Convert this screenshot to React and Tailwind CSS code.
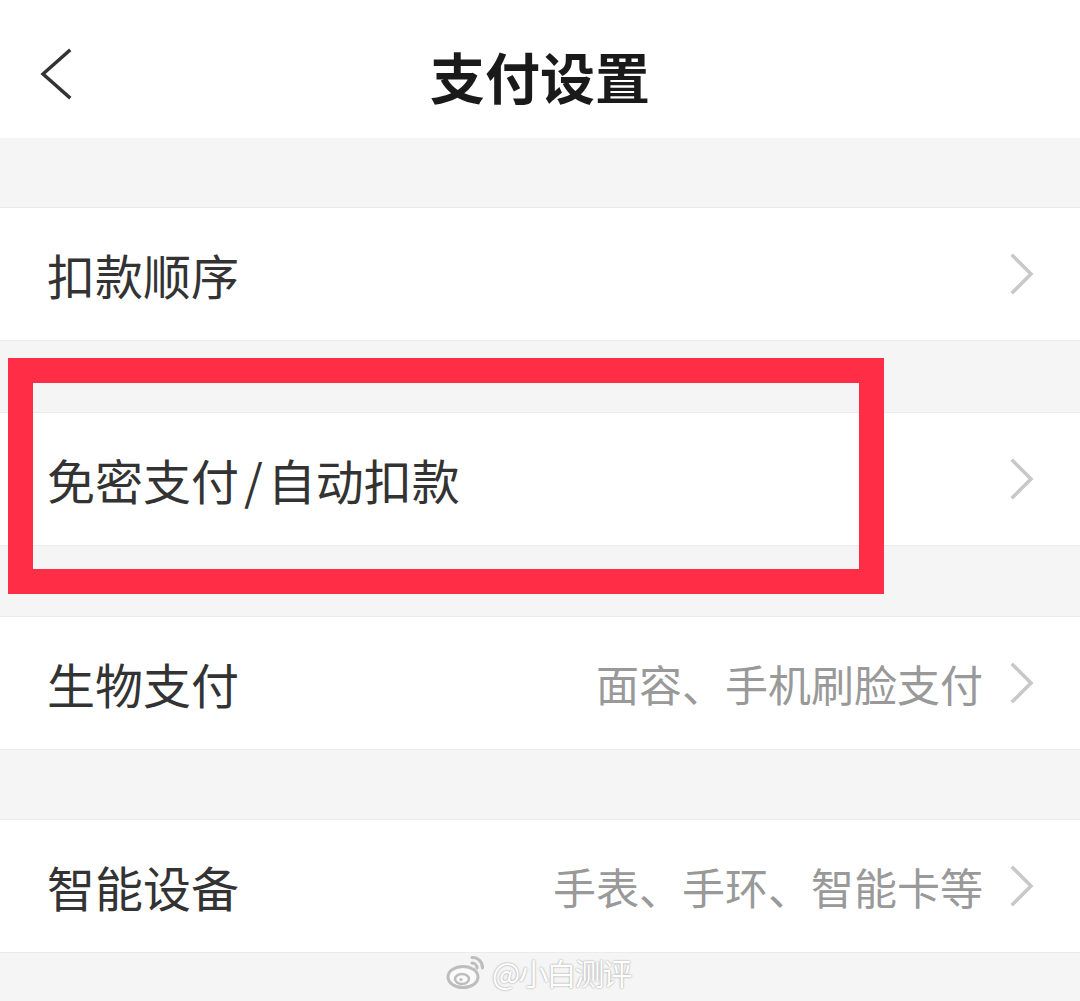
const font = { fontFamily: '"Noto Sans CJK SC", "Noto Sans", sans-serif' };

const Gap = ({ h = "h-[70px]", children }) => (
  <div className={`${h} bg-[#f5f5f5] relative`}>{children}</div>
);

const Arrow = () => (
  <svg width="26" height="42" viewBox="0 0 26 42" fill="none">
    <path d="M4 3 L22 21 L4 39" stroke="#c8c8c8" strokeWidth="3.6" strokeLinecap="square" strokeLinejoin="miter" />
  </svg>
);

const BackArrow = () => (
  <svg width="36" height="52" viewBox="0 0 36 52" fill="none">
    <path d="M31 3 L5 26 L31 49" stroke="#333333" strokeWidth="3.4" strokeLinecap="square" strokeLinejoin="miter" />
  </svg>
);

const Row = ({ label, hint }) => (
  <div className="h-[134px] bg-white border-y border-[#ebebeb] flex items-center justify-between pl-[47px] pr-[45px]">
    <span className="text-[48px] text-[#333333] leading-none">{label}</span>
    <div className="flex items-center gap-[26px]">
      {hint && (
        <span className="text-[43px] text-[#999999] leading-none">{hint}</span>
      )}
      <Arrow />
    </div>
  </div>
);

const WeiboLogo = () => (
  <svg width="40" height="36" viewBox="0 0 40 36" fill="none">
    <ellipse cx="17" cy="23" rx="15" ry="10.5" stroke="#bdbdbd" strokeWidth="3" fill="#fafafa" />
    <ellipse cx="16" cy="25" rx="7" ry="5" stroke="#bdbdbd" strokeWidth="2.5" />
    <circle cx="15" cy="25.5" r="1.6" fill="#bdbdbd" />
    <path d="M26 3.5 A10 10 0 0 1 36.5 14" stroke="#bdbdbd" strokeWidth="3" strokeLinecap="round" />
    <path d="M26 9 A5 5 0 0 1 31 14" stroke="#bdbdbd" strokeWidth="3" strokeLinecap="round" />
  </svg>
);

export default function App() {
  return (
    <div className="w-[1080px] h-[1001px] bg-[#f5f5f5] overflow-hidden relative" style={font}>
      {/* header */}
      <header className="h-[138px] bg-white grid grid-cols-[1fr_auto_1fr] items-center">
        <div className="pl-[38px] pt-[10px]">
          <BackArrow />
        </div>
        <h1 className="text-[55px] font-bold text-[#1a1a1a] leading-none pt-[12px]">
          支付设置
        </h1>
        <div />
      </header>

      <Gap h="h-[69px]" />
      <Row label="扣款顺序" />
      <Gap h="h-[71px]" />
      <Row
        label={
          <>
            免密支付<span className="mx-[5px]">/</span>自动扣款
          </>
        }
      />
      <Gap />
      <Row label="生物支付" hint="面容、手机刷脸支付" />
      <Gap h="h-[69px]" />
      <Row label="智能设备" hint="手表、手环、智能卡等" />
      <Gap h="h-[46px]">
        <div className="flex items-center pl-[446px] pt-[1px] gap-[6px]">
          <WeiboLogo />
          <span className="text-[30px] leading-none text-white tracking-[-2px] [text-shadow:0_0_2px_rgba(0,0,0,0.45)]">
            @小白测评
          </span>
        </div>
      </Gap>

      {/* highlight box drawn over the screenshot */}
      <div className="absolute left-[8px] top-[358px] w-[876px] h-[236px] border-[25px] border-[#ff2d45] pointer-events-none" />
    </div>
  );
}
